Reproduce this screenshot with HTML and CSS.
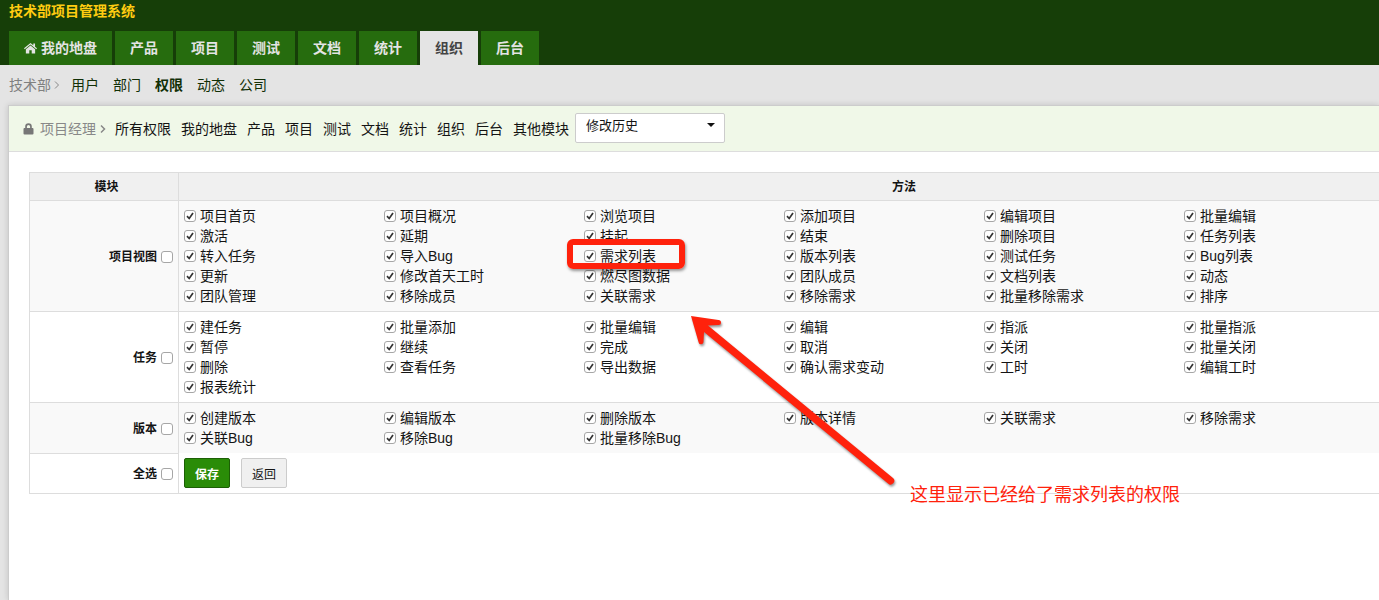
FILE: index.html
```html
<!DOCTYPE html>
<html lang="zh-CN">

<head>
    <meta charset="UTF-8">
    <meta name="viewport" content="width=device-width, initial-scale=1.0">
    <title>技术部项目管理系统 - 权限</title>
    <link rel="stylesheet" href="styles.css">
</head>

<body>
    <header class="header">
        <h1 class="company">技术部项目管理系统</h1>
        <nav class="mainmenu">
            <a href="#"><svg class="icon-home" viewBox="0 0 14 12" aria-hidden="true"><path d="M7 .6 0 6.4l.8.9L7 2.2l6.2 5.1.8-.9-2.1-1.8V1.2H10v1.9z"/><path d="M7 3.2 2 7.3V12h3.7V8.4h2.6V12H12V7.3z"/></svg>我的地盘</a>
            <a href="#">产品</a>
            <a href="#">项目</a>
            <a href="#">测试</a>
            <a href="#">文档</a>
            <a href="#">统计</a>
            <a href="#" class="active">组织</a>
            <a href="#">后台</a>
        </nav>
    </header>

    <nav class="modulemenu">
        <span class="crumb">技术部<svg class="icon-angle" viewBox="0 0 6 8" aria-hidden="true"><path d="M1 .5 4.5 4 1 7.5"/></svg></span>
        <a href="#">用户</a>
        <a href="#">部门</a>
        <a href="#" class="active">权限</a>
        <a href="#">动态</a>
        <a href="#">公司</a>
    </nav>

    <main class="outer">
        <div class="featurebar">
            <span class="heading"><svg class="icon-lock" viewBox="0 0 10 12" aria-hidden="true"><path d="M1 5h.7V3.6a3.3 3.3 0 0 1 6.6 0V5H9a1 1 0 0 1 1 1v4.5a1 1 0 0 1-1 1H1a1 1 0 0 1-1-1V6a1 1 0 0 1 1-1zm2.4 0h3.2V3.6a1.6 1.6 0 0 0-3.2 0z"/></svg>项目经理<svg class="icon-angle" viewBox="0 0 6 8" aria-hidden="true"><path d="M1 .5 4.5 4 1 7.5"/></svg></span>
            <nav class="filters">
                <a href="#">所有权限</a>
                <a href="#">我的地盘</a>
                <a href="#">产品</a>
                <a href="#">项目</a>
                <a href="#">测试</a>
                <a href="#">文档</a>
                <a href="#">统计</a>
                <a href="#">组织</a>
                <a href="#">后台</a>
                <a href="#">其他模块</a>
            </nav>
            <select class="version" aria-label="修改历史">
                <option>修改历史</option>
            </select>
        </div>

        <form class="privform">
            <table class="table">
                <thead>
                    <tr>
                        <th class="col-module">模块</th>
                        <th class="col-method">方法</th>
                    </tr>
                </thead>
                <tbody>
                    <tr class="even">
                        <th><label>项目视图<input type="checkbox"></label></th>
                        <td>
                            <div class="privs">
                                <label><input type="checkbox" checked>项目首页</label>
                                <label><input type="checkbox" checked>项目概况</label>
                                <label><input type="checkbox" checked>浏览项目</label>
                                <label><input type="checkbox" checked>添加项目</label>
                                <label><input type="checkbox" checked>编辑项目</label>
                                <label><input type="checkbox" checked>批量编辑</label>
                                <label><input type="checkbox" checked>激活</label>
                                <label><input type="checkbox" checked>延期</label>
                                <label><input type="checkbox" checked>挂起</label>
                                <label><input type="checkbox" checked>结束</label>
                                <label><input type="checkbox" checked>删除项目</label>
                                <label><input type="checkbox" checked>任务列表</label>
                                <label><input type="checkbox" checked>转入任务</label>
                                <label><input type="checkbox" checked>导入Bug</label>
                                <label><input type="checkbox" checked>需求列表</label>
                                <label><input type="checkbox" checked>版本列表</label>
                                <label><input type="checkbox" checked>测试任务</label>
                                <label><input type="checkbox" checked>Bug列表</label>
                                <label><input type="checkbox" checked>更新</label>
                                <label><input type="checkbox" checked>修改首天工时</label>
                                <label><input type="checkbox" checked>燃尽图数据</label>
                                <label><input type="checkbox" checked>团队成员</label>
                                <label><input type="checkbox" checked>文档列表</label>
                                <label><input type="checkbox" checked>动态</label>
                                <label><input type="checkbox" checked>团队管理</label>
                                <label><input type="checkbox" checked>移除成员</label>
                                <label><input type="checkbox" checked>关联需求</label>
                                <label><input type="checkbox" checked>移除需求</label>
                                <label><input type="checkbox" checked>批量移除需求</label>
                                <label><input type="checkbox" checked>排序</label>
                            </div>
                        </td>
                    </tr>
                    <tr>
                        <th><label>任务<input type="checkbox"></label></th>
                        <td>
                            <div class="privs">
                                <label><input type="checkbox" checked>建任务</label>
                                <label><input type="checkbox" checked>批量添加</label>
                                <label><input type="checkbox" checked>批量编辑</label>
                                <label><input type="checkbox" checked>编辑</label>
                                <label><input type="checkbox" checked>指派</label>
                                <label><input type="checkbox" checked>批量指派</label>
                                <label><input type="checkbox" checked>暂停</label>
                                <label><input type="checkbox" checked>继续</label>
                                <label><input type="checkbox" checked>完成</label>
                                <label><input type="checkbox" checked>取消</label>
                                <label><input type="checkbox" checked>关闭</label>
                                <label><input type="checkbox" checked>批量关闭</label>
                                <label><input type="checkbox" checked>删除</label>
                                <label><input type="checkbox" checked>查看任务</label>
                                <label><input type="checkbox" checked>导出数据</label>
                                <label><input type="checkbox" checked>确认需求变动</label>
                                <label><input type="checkbox" checked>工时</label>
                                <label><input type="checkbox" checked>编辑工时</label>
                                <label><input type="checkbox" checked>报表统计</label>
                            </div>
                        </td>
                    </tr>
                    <tr class="even">
                        <th><label>版本<input type="checkbox"></label></th>
                        <td>
                            <div class="privs">
                                <label><input type="checkbox" checked>创建版本</label>
                                <label><input type="checkbox" checked>编辑版本</label>
                                <label><input type="checkbox" checked>删除版本</label>
                                <label><input type="checkbox" checked>版本详情</label>
                                <label><input type="checkbox" checked>关联需求</label>
                                <label><input type="checkbox" checked>移除需求</label>
                                <label><input type="checkbox" checked>关联Bug</label>
                                <label><input type="checkbox" checked>移除Bug</label>
                                <label><input type="checkbox" checked>批量移除Bug</label>
                            </div>
                        </td>
                    </tr>
                    <tr class="actions">
                        <th><label>全选<input type="checkbox"></label></th>
                        <td>
                            <div class="buttons">
                                <button type="submit" class="btn btn-primary">保存</button>
                                <button type="button" class="btn">返回</button>
                            </div>
                        </td>
                    </tr>
                </tbody>
            </table>
        </form>
    </main>

    <!-- 标注 -->
    <div class="mark-box"></div>
    <svg class="mark-arrow" viewBox="0 0 220 185" aria-hidden="true"><path d="M11 11 38.500 15a2.500 2.500 0 0 1 0 5L28 20.500 213 173a3.500 3.500 0 0 1-5 5.500L24 27l-.5 9.500a2.500 2.500 0 0 1-5 .5z"/></svg>
    <p class="mark-text">这里显示已经给了需求列表的权限</p>
</body>

</html>
```
FILE: styles.css
```css
* {
    box-sizing: border-box;
}

body {
    margin: 0;
    min-height: 100vh;
    display: flex;
    flex-direction: column;
    position: relative;
    font-family: "Liberation Sans", "Noto Sans CJK SC", sans-serif;
    font-size: 14px;
    line-height: 20px;
    color: #141414;
    background: #e4e4e4;
    overflow-x: hidden;
}

a {
    color: inherit;
    text-decoration: none;
}

/* header */
.header {
    padding: 0 9px;
    background: #163e08;
}

.company {
    margin: 0;
    padding-bottom: 9px;
    font-size: 14px;
    line-height: 22px;
    color: #fc1;
}

.mainmenu {
    display: flex;
    gap: 3px;
}

.mainmenu a {
    padding: 0 15px;
    line-height: 34px;
    font-weight: bold;
    color: #e4e4e4;
    background: #266c0e;
}

.mainmenu a.active {
    color: #444;
    background: #e4e4e4;
}

.icon-home {
    width: 13px;
    height: 12px;
    margin-right: 4px;
    fill: #e4e4e4;
    vertical-align: -1px;
}

.icon-angle {
    width: 6px;
    height: 8px;
    margin-left: 3px;
    fill: none;
    stroke: #888;
    vertical-align: 1px;
}

/* module menu */
.modulemenu {
    display: flex;
    padding: 10px 9px;
    color: #112f06;
}

.modulemenu a {
    padding: 0 7px;
}

.modulemenu a.active {
    font-weight: bold;
}

.crumb {
    margin-right: 4px;
    color: #808080;
}

.outer {
    flex: 1;
    margin-left: 8px;
    background: #fff;
    border-top: 1px solid #ccc;
    border-left: 1px solid #ccc;
    box-shadow: 0 0 6px rgba(0, 0, 0, 0.15);
}

.featurebar {
    display: flex;
    align-items: center;
    padding: 7px 14px 8px;
    background: #f0f8e8;
    border-bottom: 1px solid #ddd;
}

.heading {
    padding-top: 2px;
    margin-right: 9px;
    color: #888;
}

.heading .icon-angle {
    height: 10px;
    margin-left: 4px;
    vertical-align: 0;
    stroke-width: 1.5;
}

.icon-lock {
    width: 11px;
    height: 12px;
    margin-right: 6px;
    fill: #777;
    vertical-align: -1px;
}

.filters {
    display: flex;
    gap: 10px;
    padding-top: 2px;
}

.version {
    width: 150px;
    height: 30px;
    margin-left: 6px;
    padding: 0 10px 6px;
    font: 13px "Liberation Sans", "Noto Sans CJK SC", sans-serif;
    color: #141414;
    background: #fff url("data:image/svg+xml,%3Csvg xmlns='http://www.w3.org/2000/svg' width='8' height='4'%3E%3Cpath d='M0 0h8L4 4z' fill='%23111'/%3E%3C/svg%3E") no-repeat right 9px top 9px;
    border: 1px solid #ccc;
    border-radius: 2px;
    appearance: none;
}

/* privileges */
.privform {
    padding: 20px 0 20px 20px;
}

.table {
    width: 100%;
    border-collapse: collapse;
    border-left: 1px solid #ddd;
}

.table th,
.table td {
    padding: 5px;
    border-top: 1px solid #ddd;
    border-bottom: 1px solid #ddd;
}

.table th {
    padding: 6px 5px 4px;
    font-size: 12px;
    text-align: right;
    border-right: 1px solid #ddd;
}

.table thead th {
    padding: 4px 5px 3px 10px;
    text-align: center;
    background: #f0f0f0;
}

.table .col-module {
    width: 151px;
}

.table thead .col-method {
    padding-left: 255px;
    border-right: none;
}

.table .even {
    background: #f9f9f9;
}

.table tr:nth-last-child(2) td {
    border-bottom: none;
}

.table .actions td {
    border-top: none;
}

.privs {
    display: grid;
    grid-template-columns: repeat(auto-fill, 190px);
    column-gap: 10px;
    max-width: 1200px;
}

.table label {
    display: flex;
    align-items: center;
    gap: 4px;
}

.table th label {
    justify-content: flex-end;
}

input[type="checkbox"] {
    width: 12px;
    height: 12px;
    margin: 0;
    background: #fff;
    border: 1px solid #a6a6a6;
    border-radius: 3px;
    appearance: none;
}

input[type="checkbox"]:checked {
    background: #fff url("data:image/svg+xml,%3Csvg xmlns='http://www.w3.org/2000/svg' width='10' height='10'%3E%3Cpath d='M2 5.200 4.200 7.500 8 2' fill='none' stroke='%23333' stroke-width='1.700'/%3E%3C/svg%3E") no-repeat center;
}

.buttons {
    display: flex;
    gap: 11px;
}

.btn {
    height: 30px;
    padding: 0 10px;
    font: 12px "Liberation Sans", "Noto Sans CJK SC", sans-serif;
    color: #141414;
    background: #f0f0f0;
    border: 1px solid #ccc;
    border-radius: 2px;
}

.btn-primary {
    font-weight: bold;
    color: #fff;
    background: #2a8c08;
    border-color: #1c5f05;
}

/* annotation */
.mark-box {
    position: absolute;
    left: 567px;
    top: 239px;
    width: 118px;
    height: 30px;
    border: 6px solid #ff220c;
    border-radius: 6px;
    box-shadow: 1px 2px 3px rgba(0, 0, 0, 0.4);
    pointer-events: none;
}

.mark-arrow {
    position: absolute;
    left: 680px;
    top: 305px;
    width: 220px;
    height: 185px;
    fill: #ff220c;
    filter: drop-shadow(1px 2px 1px rgba(0, 0, 0, 0.4));
    pointer-events: none;
}

.mark-text {
    position: absolute;
    left: 910px;
    top: 483px;
    margin: 0;
    font-size: 18px;
    line-height: 24px;
    color: #ff220c;
}
```
